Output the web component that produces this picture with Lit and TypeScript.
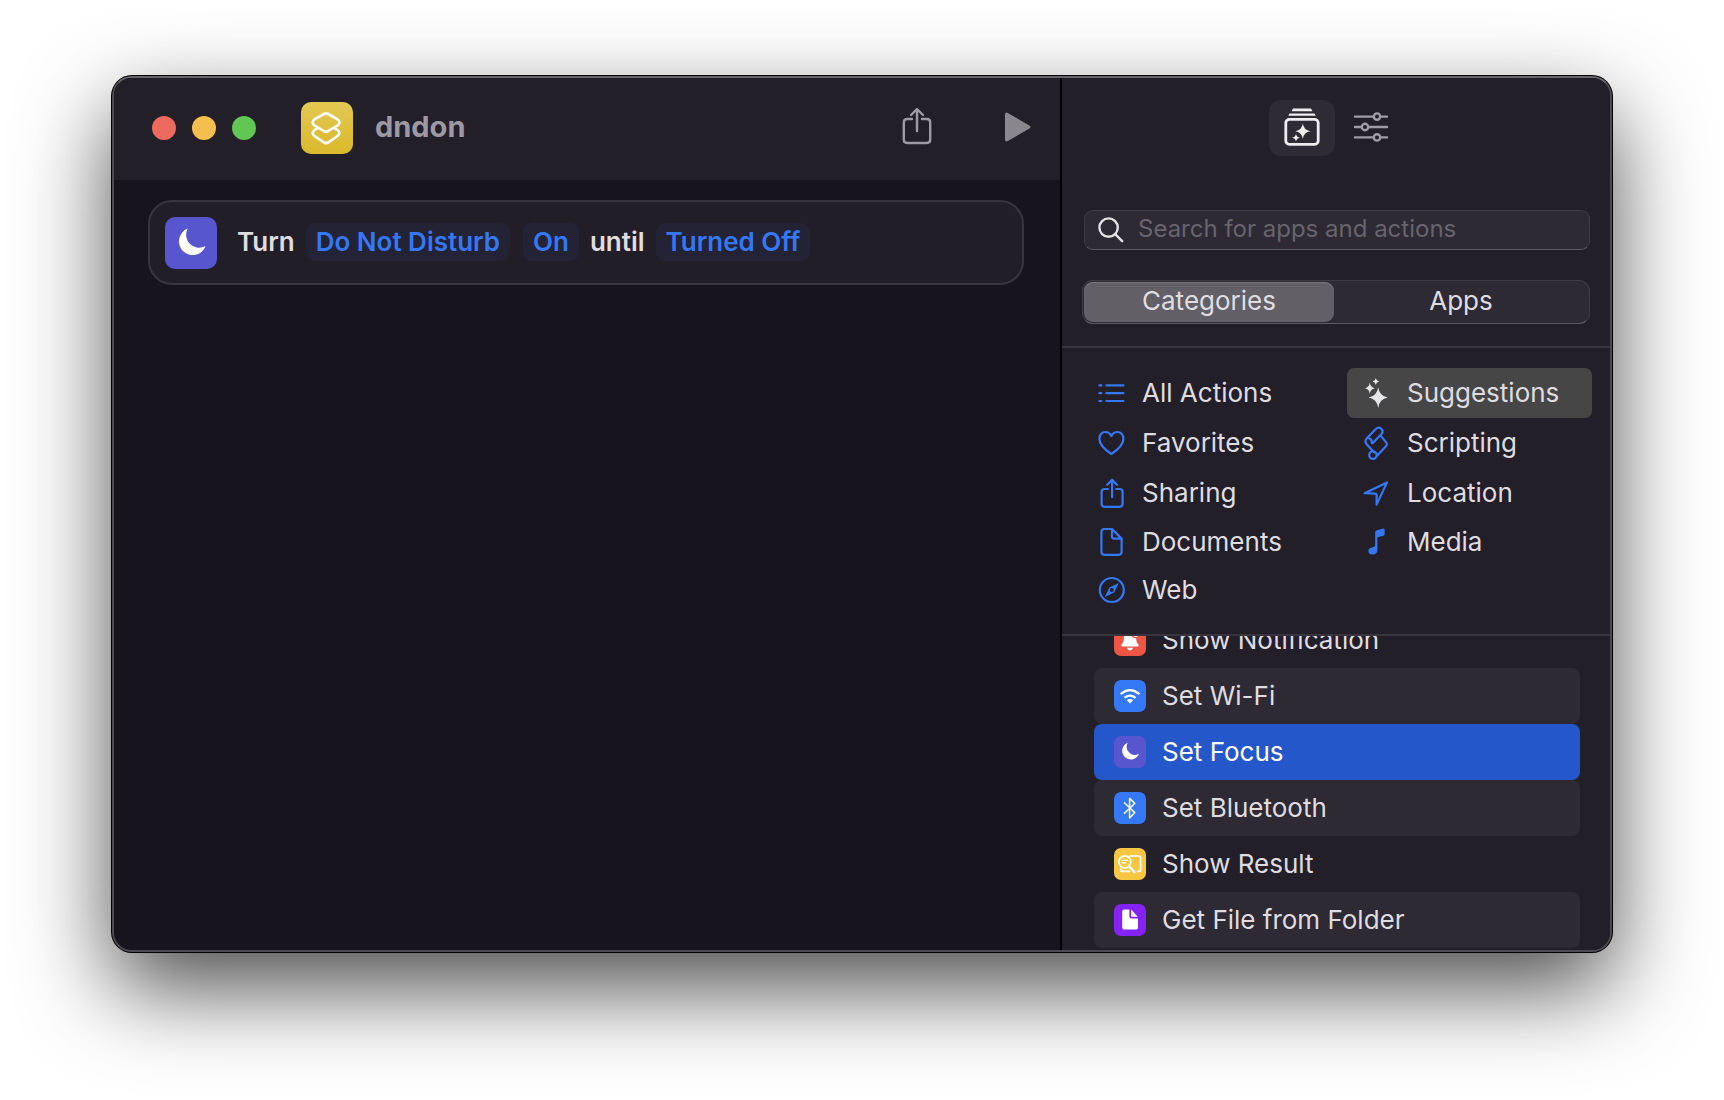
import { LitElement, html, svg, css } from "lit";
import { customElement, state } from "lit/decorators.js";
import { classMap } from "lit/directives/class-map.js";

const moon = svg`<path fill="#fff" d="M22.8 11.6A13.7 13.7 0 1 0 40.6 29A12.9 12.9 0 0 1 22.8 11.6Z"/>`;

const shareIcon = html`<svg class="share" viewBox="0 0 32 38" aria-hidden="true">
  <path d="M11 12H6.2Q2.8 12 2.8 15.4V32.6Q2.8 36 6.2 36H25.8Q29.2 36 29.2 32.6V15.4Q29.2 12 25.8 12H21M16 24V2.6M10 8L16 2L22 8"/>
</svg>`;

const playIcon = html`<svg class="play" viewBox="0 0 26 30" aria-hidden="true">
  <path d="M0 2.6Q0 -.4 2.8 1L24.4 13.4Q26.6 15 24.4 16.6L2.8 29Q0 30.4 0 27.4Z"/>
</svg>`;

const libraryIcon = html`<svg class="library" viewBox="0 0 36 38" aria-hidden="true">
  <path fill="currentColor" d="M9 .6H27L28.4 3.2H7.6ZM5.6 5.4H30.4L31.8 7.8H4.2Z"/>
  <rect x="1.8" y="11.4" width="32.4" height="25" rx="3.6" fill="none" stroke="currentColor" stroke-width="2.8"/>
  <path fill="currentColor" d="M18.8 15.6Q19.6 22.2 26.4 23.2Q19.6 24.2 18.8 31Q18 24.2 11.2 23.2Q18 22.2 18.8 15.6ZM12 25.8Q12.4 29.2 16 29.8Q12.4 30.4 12 33.8Q11.6 30.4 8 29.8Q11.6 29.2 12 25.8Z"/>
</svg>`;

const slidersIcon = html`<svg class="sliders" viewBox="0 0 34 30" aria-hidden="true">
  <path d="M1 4.6H19M27 4.6H33M1 15H7M15 15H33M1 25.4H19M27 25.4H33"/>
  <circle cx="23" cy="4.6" r="3.2"/><circle cx="11" cy="15" r="3.2"/><circle cx="23" cy="25.4" r="3.2"/>
</svg>`;

const searchIcon = html`<svg class="magnifier" viewBox="0 0 26 26" aria-hidden="true">
  <circle cx="10.6" cy="10.6" r="9.2"/><path d="M17.4 17.4L24.2 24.2"/>
</svg>`;

const categoryIcons: Record<string, unknown> = {
  "All Actions": svg`<path d="M2.4 7.4H4.4M2.4 15.2H4.4M2.4 23H4.4M9.4 7.4H26.4M9.4 15.2H26.4M9.4 23H26.4"/>`,
  Favorites: svg`<path d="M14.4 26C6.8 21 2.4 15.8 2.4 10.8C2.4 6.6 5.2 4 8.4 4C11.2 4 13.2 5.4 14.4 8C15.6 5.4 17.6 4 20.4 4C23.6 4 26.4 6.6 26.4 10.8C26.4 15.8 22 21 14.4 26Z"/>`,
  Sharing: svg`<path d="M11 11H7.6Q4.6 11 4.6 14V25.8Q4.6 28.8 7.6 28.8H22.6Q25.6 28.8 25.6 25.8V14Q25.6 11 22.6 11H19.2M15.1 19.2V2.2M10.2 6.8L15.1 1.8L20 6.8"/>`,
  Documents: svg`<path d="M15 2H7.4Q4.4 2 4.4 5V24.8Q4.4 27.8 7.4 27.8H21.6Q24.6 27.8 24.6 24.8V11.6L15 2V9.2Q15 11.6 17.4 11.6H24.6"/>`,
  Web: svg`<circle cx="14.8" cy="15" r="12"/><path fill="currentColor" stroke="none" fill-rule="evenodd" d="M21.8 8L17.2 17.4L7.8 22L12.4 12.6ZM14.8 13A2 2 0 1 0 14.8 17A2 2 0 1 0 14.8 13Z"/>`,
  Suggestions: svg`<path fill="currentColor" stroke="none" d="M16.2 9.2Q17.4 18 25.8 19.6Q17.4 21.2 16.2 30Q15 21.2 6.6 19.6Q15 18 16.2 9.2ZM7.8 4.6Q8.4 9.4 12.8 10.2Q8.4 11 7.8 15.8Q7.2 11 3 10.2Q7.2 9.4 7.8 4.6ZM13.8 0Q14.2 3 17 3.6Q14.2 4.2 13.8 7Q13.4 4.2 10.6 3.6Q13.4 3 13.8 0Z"/>`,
  Scripting: svg`<path d="M4.8 16.4Q2.2 13.4 4.6 10.6L13.8 1Q16.4 -1.4 19.2 .6Q21.8 3 19.6 6L10.8 15Q10 15.6 9.8 14.4Q10 11.2 7.4 10.6M4.8 16.4L12 24.2M18.4 7.4L24.4 14.6Q25.6 16.2 24.4 17.8L14.6 28.2M12 23.4A3.8 3.8 0 1 0 14.6 28.2Q15.6 25.4 12 23.4Z"/>`,
  Location: svg`<path d="M25 4.4L14.6 26.6V16.8Q14.6 15.6 13.4 15.6L2.6 15.2Z"/>`,
  Media: svg`<path fill="currentColor" stroke="none" d="M13.2 5.2Q13.2 3.6 14.8 3.2L21.2 1.6Q22.6 1.4 22.6 2.8V7.2Q22.6 8.4 21.2 8.8L15.4 10.2V22.6Q15.4 27.6 10.4 27.6Q6.4 27.6 6.4 24Q6.4 20.6 11 20.2Q13.2 20 13.2 18.6Z"/>`,
};

const actionIcons: Record<string, unknown> = {
  bell: svg`<path fill="#fff" d="M16 5Q21.6 6 22 13Q22.2 18.6 24.4 20.4Q25.4 22.4 23.4 22.4H8.6Q6.6 22.4 7.6 20.4Q9.8 18.6 10 13Q10.4 6 16 5ZM13 23.8H19Q18.6 26.4 16 26.4Q13.4 26.4 13 23.8Z"/><circle cx="21.6" cy="9.6" r="4" fill="#fff" stroke="#ee5545" stroke-width="1.4"/>`,
  wifi: svg`<g fill="none" stroke="#fff" stroke-width="2.2"><path d="M6.6 14.2Q16 6.2 25.4 14.2M10.4 17.8Q16 13.4 21.6 17.8"/></g><path fill="#fff" d="M12.8 20.2Q16 17.8 19.2 20.2L16 23.4Z"/>`,
  moon: svg`<g transform="translate(-.6 -.6) scale(.63)">${moon}</g>`,
  bluetooth: svg`<path fill="none" stroke="#fff" stroke-width="1.5" stroke-linejoin="round" stroke-linecap="round" d="M10.4 10.8L20.8 20.6L15.6 26V6.4L20.8 11.4L10.4 21.2"/>`,
  result: svg`<g fill="none" stroke="#fff" stroke-width="1.7" stroke-linecap="round"><circle cx="10.8" cy="13.8" r="6"/><path stroke-width="2.4" d="M15.4 18.6L20.4 24"/><path stroke-width="1.2" d="M8 12.4H13.6M8 14.8H12"/><path d="M15.6 8H24.6Q26.6 8 26.6 10V21.4Q26.6 23.4 24.6 23.4H23.6M6.8 21V22Q6.8 23.4 8.6 23.4H15.4"/></g>`,
  file: svg`<path fill="#fff" d="M15.4 5.4V12.6Q15.4 14.6 17.4 14.6H24V23.4Q24 25.6 21.8 25.6H10.4Q8.2 25.6 8.2 23.4V7.6Q8.2 5.4 10.4 5.4ZM17.2 5.6L23.8 12.8H17.2Z"/>`,
};

const categories = [
  "All Actions", "Suggestions",
  "Favorites", "Scripting",
  "Sharing", "Location",
  "Documents", "Media",
  "Web",
];

const actions = [
  { name: "Show Notification", icon: "bell", tint: "red" },
  { name: "Set Wi-Fi", icon: "wifi", tint: "blue" },
  { name: "Set Focus", icon: "moon", tint: "indigo" },
  { name: "Set Bluetooth", icon: "bluetooth", tint: "blue" },
  { name: "Show Result", icon: "result", tint: "yellow" },
  { name: "Get File from Folder", icon: "file", tint: "purple" },
];

@customElement("app-root")
export class AppRoot extends LitElement {
  @state() private tab = "Categories";
  @state() private category = "Suggestions";
  @state() private action = "Set Focus";

  static styles = css`
    :host {
      display: flex;
      box-sizing: border-box;
      height: 100vh;
      padding: 76px 112px 148px;
      background: #fff;
      color: #dfdde1;
      font: 400 26px/32px Inter, "Liberation Sans", sans-serif;
      overflow: hidden;
    }
    * { box-sizing: border-box; }
    button, input { font: inherit; color: inherit; border: 0; background: none; padding: 0; margin: 0; }
    svg { display: block; flex: none; overflow: visible; }
    h1, ul, p { margin: 0; padding: 0; list-style: none; }
    .window {
      flex: 1;
      display: grid;
      grid-template-columns: minmax(0, 1fr) 550px;
      border: 2px solid #4d4a53;
      border-top-color: #67646c;
      border-radius: 20px;
      background: #231f29;
      box-shadow: 0 0 0 1px #000, 0 36px 90px rgba(0, 0, 0, 0.7);
      overflow: hidden;
    }
    .editor { display: flex; flex-direction: column; background: #18141e; }
    .titlebar {
      display: flex;
      align-items: center;
      height: 102px;
      padding: 0 29px 2px 38px;
      background: #231f29;
    }
    .lights { display: flex; gap: 16px; margin-right: 45px; }
    .light { width: 24px; height: 24px; border-radius: 50%; }
    .close { background: #ed6a5e; }
    .minimise { background: #f5bf4f; }
    .zoom { background: #62c655; }
    .app-icon {
      width: 52px; height: 52px; border-radius: 10px;
      background: linear-gradient(#e3c853, #dbb92d);
    }
    .app-icon path { fill: none; stroke: #fff; stroke-width: 2.6; stroke-linejoin: round; stroke-linecap: round; }
    h1 { flex: 1; margin-left: 22px; padding-bottom: 2px; font-size: 29px; font-weight: 700; color: #9d99a2; }
    .titlebar .run { margin-left: 72px; padding-bottom: 2px; }
    .titlebar .send { padding-bottom: 5px; }
    .share { width: 32px; height: 38px; fill: none; stroke: #9e9aa3; stroke-width: 2.4; stroke-linecap: round; stroke-linejoin: round; }
    .play { width: 26px; height: 30px; fill: #89878b; }
    .canvas { flex: 1; padding: 20px 36px 20px 34px; }
    .card {
      display: flex;
      align-items: center;
      border: 2px solid #38353d;
      border-radius: 24px;
      padding: 15px 15px 14px;
      background: #221e28;
      font-weight: 600;
    }
    .focus-icon { width: 52px; height: 52px; border-radius: 10px; background: #5856cf; }
    .sentence { display: flex; flex-wrap: wrap; align-items: center; gap: 11px; margin-left: 20px; padding-bottom: 2px; }
    .token {
      height: 38px;
      padding: 0 10px;
      border-radius: 9px;
      background: #232335;
      color: #3478f6;
    }
    .token + .token { margin-left: 2px; }
    .sidebar {
      display: flex;
      flex-direction: column;
      min-height: 0;
      border-left: 2px solid #000;
      background: #231f29;
    }
    .tools { display: flex; justify-content: center; gap: 19px; padding: 22px 15px 54px 0; }
    .tool { display: grid; place-items: center; height: 56px; padding-bottom: 3px; color: #a09ca6; }
    .tool.active { width: 66px; border-radius: 12px; background: #2f2b35; color: #eeedf0; }
    .library { width: 36px; height: 38px; }
    .sliders { width: 34px; height: 30px; fill: none; stroke: currentColor; stroke-width: 2.4; stroke-linecap: round; }
    .search {
      display: flex;
      align-items: center;
      gap: 14px;
      height: 40px;
      margin: 0 20px 30px 22px;
      padding: 0 13px;
      border: 1px solid #3e3b43;
      border-bottom: 1px solid #5c5962;
      border-radius: 9px;
      background: #2d2a33;
    }
    .magnifier { width: 26px; height: 26px; fill: none; stroke: #e3e1e5; stroke-width: 2.4; stroke-linecap: round; }
    .search input { flex: 1; min-width: 0; padding-bottom: 2px; font-size: 24px; outline: none; appearance: none; }
    .search input::placeholder { color: #67646c; opacity: 1; }
    .segments {
      display: grid;
      grid-template-columns: 250px 1fr;
      height: 44px;
      margin: 0 20px 22px 20px;
      padding: 1px;
      border: 1px solid #3e3b43;
      border-bottom-color: #5c5962;
      border-radius: 11px;
      background: #2d2a33;
    }
    .segment { padding-bottom: 2px; border-radius: 9px; }
    .segment.active { background: #625f66; box-shadow: inset 0 1px #78757c; }
    .categories {
      display: grid;
      grid-template: 50px 50px 50px 48px 48px / 245px 245px;
      column-gap: 20px;
      padding: 20px 18px 20px 20px;
      border: solid #37343e;
      border-width: 2px 0;
    }
    .category { display: flex; align-items: center; gap: 15px; padding-left: 15px; border-radius: 7px; text-align: left; }
    .category svg { width: 30px; height: 30px; fill: none; stroke: #3478f6; color: #3478f6; stroke-width: 2.2; stroke-linecap: round; stroke-linejoin: round; }
    .category.active { background: #464646; }
    .category.active svg { color: #e6e5e7; }
    .actions {
      flex: 1;
      min-height: 0;
      display: flex;
      flex-direction: column;
      justify-content: flex-end;
      padding: 0 30px 2px 32px;
      overflow: hidden;
    }
    .action {
      display: flex;
      align-items: center;
      gap: 16px;
      width: 100%;
      height: 56px;
      padding: 0 20px;
      border-radius: 8px;
      text-align: left;
    }
    li:nth-child(even) .action { background: #2d2a33; }
    li .action.active { background: #2458ca; color: #fff; }
    .badge { width: 32px; height: 32px; border-radius: 7px; }
    .red { background: #ee5545; }
    .blue { background: #3478f6; }
    .indigo { background: #5856cf; }
    .yellow { background: #f7c744; }
    .purple { background: #8522f5; }
  `;

  render() {
    return html`
      <main class="window">
        <section class="editor">
          <header class="titlebar">
            <div class="lights">
              <button class="light close" aria-label="Close"></button>
              <button class="light minimise" aria-label="Minimise"></button>
              <button class="light zoom" aria-label="Zoom"></button>
            </div>
            <svg class="app-icon" viewBox="0 0 52 52" aria-hidden="true">
              <path d="M22.8 12Q25 10.8 27.2 12L36.2 17.2Q38.4 18.6 38.4 20.4Q38.4 22.2 36.2 23.6L27.2 29Q25 30.2 22.8 29L13.8 23.6Q11.6 22.2 11.6 20.4Q11.6 18.6 13.8 17.2ZM16.4 26.2L13.8 27.8Q11.6 29.2 11.6 31Q11.6 32.8 13.8 34.2L22.8 40.4Q25 41.8 27.2 40.4L36.2 34.2Q38.4 32.8 38.4 31Q38.4 29.2 36.2 27.8L33.6 26.2"/>
            </svg>
            <h1>dndon</h1>
            <button class="send" aria-label="Share">${shareIcon}</button>
            <button class="run" aria-label="Run">${playIcon}</button>
          </header>
          <div class="canvas">
            <article class="card">
              <svg class="focus-icon" viewBox="0 0 52 52" aria-hidden="true">${moon}</svg>
              <p class="sentence">
                <span>Turn</span>
                <button class="token">Do Not Disturb</button>
                <button class="token">On</button>
                <span>until</span>
                <button class="token">Turned Off</button>
              </p>
            </article>
          </div>
        </section>
        <aside class="sidebar">
          <div class="tools">
            <button class="tool active" aria-label="Action library">${libraryIcon}</button>
            <button class="tool" aria-label="Shortcut details">${slidersIcon}</button>
          </div>
          <label class="search">
            ${searchIcon}
            <input type="search" aria-label="Search for apps and actions" placeholder="Search for apps and actions" />
          </label>
          <div class="segments">
            ${["Categories", "Apps"].map(
              (name) => html`<button
                class=${classMap({ segment: true, active: name === this.tab })}
                aria-pressed=${name === this.tab}
                @click=${() => (this.tab = name)}
              >${name}</button>`
            )}
          </div>
          <nav class="categories">
            ${categories.map(
              (name) => html`<button
                class=${classMap({ category: true, active: name === this.category })}
                @click=${() => (this.category = name)}
              ><svg viewBox="0 0 30 30" aria-hidden="true">${categoryIcons[name]}</svg>${name}</button>`
            )}
          </nav>
          <ul class="actions">
            ${actions.map(
              (a) => html`<li><button
                class=${classMap({ action: true, active: a.name === this.action })}
                @click=${() => (this.action = a.name)}
              ><svg class="badge ${a.tint}" viewBox="0 0 32 32" aria-hidden="true">${actionIcons[a.icon]}</svg>${a.name}</button></li>`
            )}
          </ul>
        </aside>
      </main>
    `;
  }
}
